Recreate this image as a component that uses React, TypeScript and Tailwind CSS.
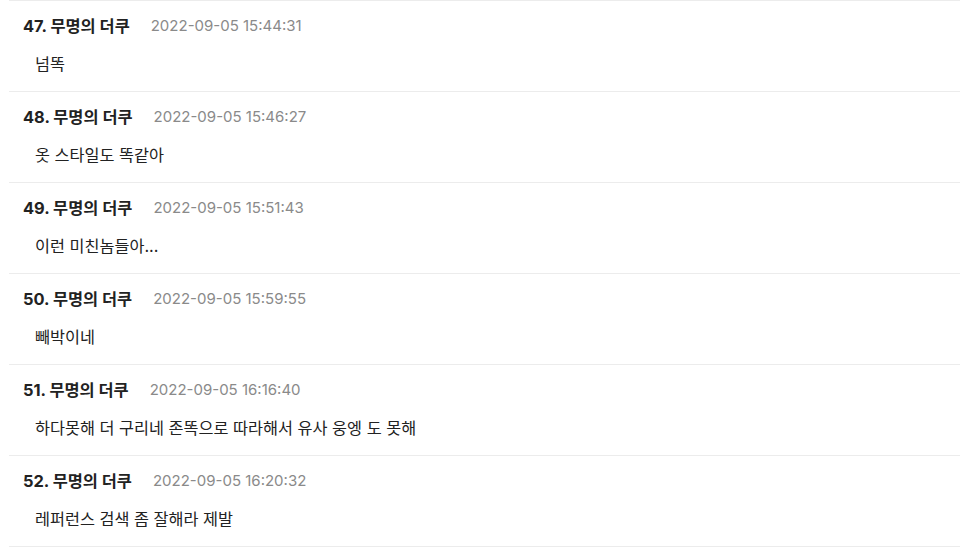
const comments = [
  { no: 47, name: "무명의 더쿠", time: "2022-09-05 15:44:31", text: "넘똑" },
  { no: 48, name: "무명의 더쿠", time: "2022-09-05 15:46:27", text: "옷 스타일도 똑같아" },
  { no: 49, name: "무명의 더쿠", time: "2022-09-05 15:51:43", text: "이런 미친놈들아..." },
  { no: 50, name: "무명의 더쿠", time: "2022-09-05 15:59:55", text: "빼박이네" },
  { no: 51, name: "무명의 더쿠", time: "2022-09-05 16:16:40", text: "하다못해 더 구리네 존똑으로 따라해서 유사 웅엥 도 못해" },
  { no: 52, name: "무명의 더쿠", time: "2022-09-05 16:20:32", text: "레퍼런스 검색 좀 잘해라 제발" },
];

export default function App() {
  return (
    <div
      className="min-h-screen bg-white"
      style={{ fontFamily: 'Inter, "Noto Sans CJK KR", sans-serif' }}
    >
      <ul className="ml-[9px] border-t border-[#ececec]">
        {comments.map((c) => (
          <li key={c.no} className="border-b border-[#ececec] pl-[14px] pt-[15px] pb-[17px]">
            <div className="flex h-5 items-center gap-[21px] leading-5">
              <span className="text-[16.4px] font-bold text-[#222]">
                {c.no}. {c.name}
              </span>
              <span className="text-[15px] text-[#8a8a8a]">{c.time}</span>
            </div>
            <p className="mt-[18px] h-5 pl-3 text-[16.3px] leading-5 text-[#222]">{c.text}</p>
          </li>
        ))}
      </ul>
    </div>
  );
}
